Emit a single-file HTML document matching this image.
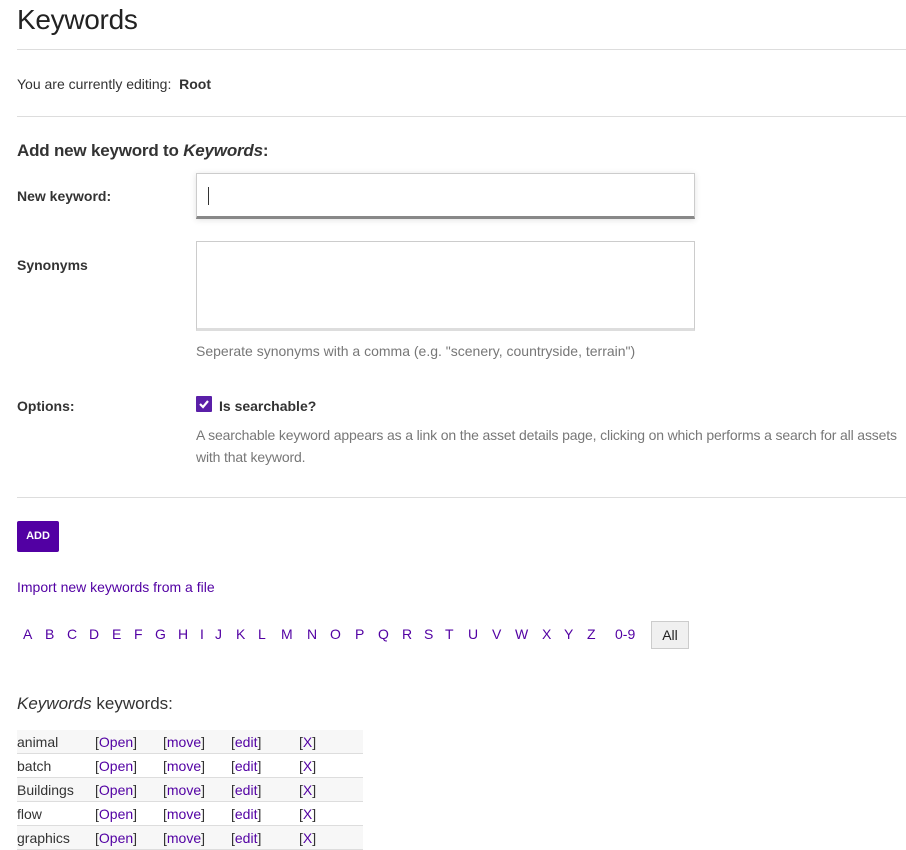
<!DOCTYPE html>
<html><head><style>
body{margin:0;width:906px;height:848px;overflow:hidden;background:#fff;font-family:"Liberation Sans",sans-serif;color:#333;font-size:14px;position:relative}
.a{position:absolute;white-space:nowrap}
.hr{position:absolute;left:17px;width:889px;height:1px;background:#ddd}
.b{font-weight:bold}
.p{color:#5200a3}
.g{color:#777}
.row{position:absolute;left:17px;width:346px;height:23px;border-bottom:1px solid #ddd;font-size:14px;line-height:24px}
.row span{position:absolute;top:0}
.row .l{color:#5200a3}
.row .l b{font-weight:normal;color:#333}
</style></head><body>
<div class="a" style="left:17px;top:4px;font-size:28px;color:#222;letter-spacing:-0.3px">Keywords</div>
<div class="hr" style="top:49px"></div>
<div class="a" style="left:17px;top:76px">You are currently editing:&nbsp; <span class="b">Root</span></div>
<div class="hr" style="top:116px"></div>
<div class="a" style="left:17px;top:141px;font-size:17px;font-weight:bold;color:#333;letter-spacing:-0.2px">Add new keyword to <i>Keywords</i>:</div>
<div class="a b" style="left:17px;top:188px">New keyword:</div>
<div class="a" style="left:196px;top:173px;width:497px;height:42px;border:1px solid #ccc;border-bottom:3px solid #888;box-shadow:0 1px 6px rgba(0,0,0,.12)"><div style="position:absolute;left:11px;top:13px;width:1px;height:18px;background:#333"></div></div>
<div class="a b" style="left:17px;top:257px">Synonyms</div>
<div class="a" style="left:196px;top:241px;width:497px;height:86px;border:1px solid #ccc;border-bottom:3px solid #ddd"></div>
<div class="a g" style="left:196px;top:343px">Seperate synonyms with a comma (e.g. "scenery, countryside, terrain")</div>
<div class="a b" style="left:17px;top:398px">Options:</div>
<div class="a" style="left:196px;top:396px;width:16px;height:16px;background:#5a1fa8;border-radius:1px"><svg width="16" height="16"><path d="M4 8l3 3 5-6" stroke="#fff" stroke-width="2.2" fill="none"/></svg></div>
<div class="a b" style="left:219px;top:398px">Is searchable?</div>
<div class="a g" style="left:196px;top:424px;line-height:22px;letter-spacing:-0.15px">A searchable keyword appears as a link on the asset details page, clicking on which performs a search for all assets<br>with that keyword.</div>
<div class="hr" style="top:497px"></div>
<div class="a" style="left:17px;top:521px;width:42px;height:31px;background:#5200a3;border-radius:2px;color:#fff;font-weight:bold;font-size:11px;line-height:31px;text-align:center">ADD</div>
<div class="a p" style="left:17px;top:579px">Import new keywords from a file</div>
<div class="a p" style="left:0;top:626px;width:700px">
<span class="a" style="left:23px">A</span><span class="a" style="left:45px">B</span><span class="a" style="left:67px">C</span><span class="a" style="left:89px">D</span><span class="a" style="left:112px">E</span><span class="a" style="left:134px">F</span><span class="a" style="left:155px">G</span><span class="a" style="left:178px">H</span><span class="a" style="left:200px">I</span><span class="a" style="left:215px">J</span><span class="a" style="left:236px">K</span><span class="a" style="left:258px">L</span><span class="a" style="left:281px">M</span><span class="a" style="left:307px">N</span><span class="a" style="left:330px">O</span><span class="a" style="left:355px">P</span><span class="a" style="left:378px">Q</span><span class="a" style="left:402px">R</span><span class="a" style="left:424px">S</span><span class="a" style="left:445px">T</span><span class="a" style="left:468px">U</span><span class="a" style="left:492px">V</span><span class="a" style="left:515px">W</span><span class="a" style="left:542px">X</span><span class="a" style="left:564px">Y</span><span class="a" style="left:587px">Z</span><span class="a" style="left:615px">0-9</span></div>
<div class="a" style="left:651px;top:621px;width:36px;height:26px;background:#f0f0f0;border:1px solid #ccc;color:#222;line-height:26px;text-align:center">All</div>
<div class="a" style="left:17px;top:694px;font-size:17px"><i>Keywords</i> keywords:</div>
<div class="row" style="top:730px;background:#f7f7f7"><span style="left:0">animal</span><span class="l" style="left:78px"><b>[</b>Open<b>]</b></span><span class="l" style="left:146px"><b>[</b>move<b>]</b></span><span class="l" style="left:214px"><b>[</b>edit<b>]</b></span><span class="l" style="left:282px"><b>[</b>X<b>]</b></span></div>
<div class="row" style="top:754px"><span style="left:0">batch</span><span class="l" style="left:78px"><b>[</b>Open<b>]</b></span><span class="l" style="left:146px"><b>[</b>move<b>]</b></span><span class="l" style="left:214px"><b>[</b>edit<b>]</b></span><span class="l" style="left:282px"><b>[</b>X<b>]</b></span></div>
<div class="row" style="top:778px;background:#f7f7f7"><span style="left:0">Buildings</span><span class="l" style="left:78px"><b>[</b>Open<b>]</b></span><span class="l" style="left:146px"><b>[</b>move<b>]</b></span><span class="l" style="left:214px"><b>[</b>edit<b>]</b></span><span class="l" style="left:282px"><b>[</b>X<b>]</b></span></div>
<div class="row" style="top:802px"><span style="left:0">flow</span><span class="l" style="left:78px"><b>[</b>Open<b>]</b></span><span class="l" style="left:146px"><b>[</b>move<b>]</b></span><span class="l" style="left:214px"><b>[</b>edit<b>]</b></span><span class="l" style="left:282px"><b>[</b>X<b>]</b></span></div>
<div class="row" style="top:826px;background:#f7f7f7"><span style="left:0">graphics</span><span class="l" style="left:78px"><b>[</b>Open<b>]</b></span><span class="l" style="left:146px"><b>[</b>move<b>]</b></span><span class="l" style="left:214px"><b>[</b>edit<b>]</b></span><span class="l" style="left:282px"><b>[</b>X<b>]</b></span></div>
</body></html>
